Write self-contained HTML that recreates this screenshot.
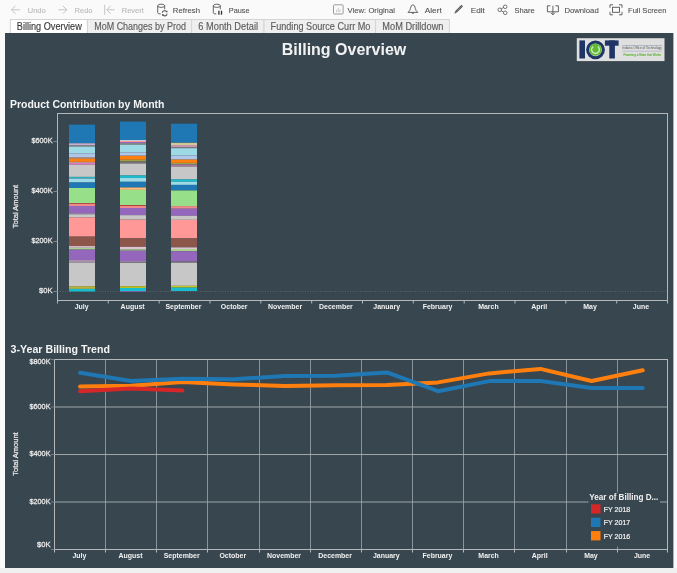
<!DOCTYPE html>
<html><head><meta charset="utf-8"><style>
html,body{margin:0;padding:0;width:677px;height:573px;overflow:hidden;background:#fafafa;font-family:"Liberation Sans", sans-serif;}
svg{position:absolute;left:0;top:0;display:block;will-change:transform}
</style></head><body>
<svg width="677" height="573" viewBox="0 0 677 573">
<rect x="0" y="0" width="677" height="573" fill="#fafafa"/>
<rect x="0" y="568" width="677" height="5" fill="#f0f0f0"/>
<path d="M20.0,9.8 H11.5 M15.5,5.800000000000001 L11.5,9.8 L15.5,13.8" stroke="#c0c0c0" fill="none" stroke-width="0.9"/>
<text x="27.8" y="12.6" font-family='"Liberation Sans", sans-serif' font-size="7.4" textLength="17.9" lengthAdjust="spacingAndGlyphs" fill="#b8b8b8" stroke="#b8b8b8" stroke-width="0.08">Undo</text>
<path d="M58.3,9.8 H66.8 M62.8,5.800000000000001 L66.8,9.8 L62.8,13.8" stroke="#c0c0c0" fill="none" stroke-width="0.9"/>
<text x="74.6" y="12.6" font-family='"Liberation Sans", sans-serif' font-size="7.4" textLength="17.9" lengthAdjust="spacingAndGlyphs" fill="#b8b8b8" stroke="#b8b8b8" stroke-width="0.08">Redo</text>
<path d="M104.7,4.800000000000001 V14.8 M114.7,9.8 H106.7 M110.7,5.800000000000001 L106.7,9.8 L110.7,13.8" stroke="#c0c0c0" fill="none" stroke-width="0.9"/>
<text x="121.7" y="12.6" font-family='"Liberation Sans", sans-serif' font-size="7.4" textLength="22.2" lengthAdjust="spacingAndGlyphs" fill="#b8b8b8" stroke="#b8b8b8" stroke-width="0.08">Revert</text>
<path d="M157.7,5.800000000000001 V12.8 Q157.7,14.0 160.7,14.0 M164.7,5.800000000000001 V9.3 M157.7,5.800000000000001 A3.5,1.6 0 0 1 164.7,5.800000000000001 A3.5,1.6 0 0 1 157.7,5.800000000000001" stroke="#555" fill="none" stroke-width="0.9"/><path d="M162.29999999999998,12.8 A2.4,2.4 0 0 1 166.7,11.8 M167.1,13.8 A2.4,2.4 0 0 1 162.7,14.8" stroke="#555" fill="none" stroke-width="1.1"/><path d="M167.5,10.4 L167.29999999999998,12.600000000000001 L165.29999999999998,12.0 Z M161.89999999999998,16.200000000000003 L162.1,14.0 L164.1,14.600000000000001 Z" fill="#555"/>
<text x="172.8" y="12.6" font-family='"Liberation Sans", sans-serif' font-size="7.4" textLength="27.2" lengthAdjust="spacingAndGlyphs" fill="#4e4e4e" stroke="#4e4e4e" stroke-width="0.08">Refresh</text>
<path d="M213.3,5.800000000000001 V12.8 Q213.3,14.0 216.3,14.0 M220.3,5.800000000000001 V9.3 M213.3,5.800000000000001 A3.5,1.6 0 0 1 220.3,5.800000000000001 A3.5,1.6 0 0 1 213.3,5.800000000000001" stroke="#555" fill="none" stroke-width="0.9"/><path d="M218.9,10.8 V14.8 M221.5,10.8 V14.8" stroke="#333" stroke-width="1.3"/>
<text x="228.8" y="12.6" font-family='"Liberation Sans", sans-serif' font-size="7.4" textLength="20.8" lengthAdjust="spacingAndGlyphs" fill="#4e4e4e" stroke="#4e4e4e" stroke-width="0.08">Pause</text>
<rect x="333.5" y="4.800000000000001" width="9.6" height="9.2" rx="0.8" stroke="#9a9a9a" fill="none" stroke-width="1"/><path d="M336.5,12.3 V9.8 M338.3,12.3 V7.800000000000001 M340,12.3 V9.3" stroke="#aaa" stroke-width="0.6"/>
<text x="347.6" y="12.6" font-family='"Liberation Sans", sans-serif' font-size="7.4" textLength="47.3" lengthAdjust="spacingAndGlyphs" fill="#4e4e4e" stroke="#4e4e4e" stroke-width="0.08">View: Original</text>
<path d="M408.0,12.4 H417.79999999999995 Q415.79999999999995,11.0 415.29999999999995,8.3 Q414.79999999999995,4.800000000000001 412.9,4.800000000000001 Q411.0,4.800000000000001 410.5,8.3 Q410.0,11.0 408.0,12.4 Z M411.7,12.8 Q412.9,14.4 414.09999999999997,12.8" stroke="#555" fill="none" stroke-width="0.9"/>
<text x="424.7" y="12.6" font-family='"Liberation Sans", sans-serif' font-size="7.4" textLength="17" lengthAdjust="spacingAndGlyphs" fill="#4e4e4e" stroke="#4e4e4e" stroke-width="0.08">Alert</text>
<path d="M455.8,12.0 L462.2,5.6000000000000005" stroke="#555" stroke-width="2.2"/><path d="M454.3,13.700000000000001 L455.2,11.600000000000001 L456.4,12.8 Z" fill="#555"/><path d="M456.6,11.200000000000001 L461.6,6.200000000000001" stroke="#bbb" stroke-width="0.5"/>
<text x="470.7" y="12.6" font-family='"Liberation Sans", sans-serif' font-size="7.4" textLength="14.1" lengthAdjust="spacingAndGlyphs" fill="#4e4e4e" stroke="#4e4e4e" stroke-width="0.08">Edit</text>
<circle cx="499.7" cy="9.8" r="1.8" stroke="#555" fill="none" stroke-width="0.8"/><circle cx="505.2" cy="6.800000000000001" r="1.8" stroke="#555" fill="none" stroke-width="0.8"/><circle cx="505.2" cy="12.8" r="1.8" stroke="#555" fill="none" stroke-width="0.8"/><path d="M501.2,8.8 L503.7,7.500000000000001 M501.2,10.8 L503.7,12.100000000000001" stroke="#555" stroke-width="0.8"/>
<text x="514.4" y="12.6" font-family='"Liberation Sans", sans-serif' font-size="7.4" textLength="20.3" lengthAdjust="spacingAndGlyphs" fill="#4e4e4e" stroke="#4e4e4e" stroke-width="0.08">Share</text>
<path d="M550.4,5.800000000000001 H547.4 V11.8 H558.4 V5.800000000000001 H555.4 M552.9,5.800000000000001 V14.8 M550.9,12.8 L552.9,14.8 L554.9,12.8" stroke="#555" fill="none" stroke-width="0.9"/>
<text x="564.4" y="12.6" font-family='"Liberation Sans", sans-serif' font-size="7.4" textLength="34.3" lengthAdjust="spacingAndGlyphs" fill="#4e4e4e" stroke="#4e4e4e" stroke-width="0.08">Download</text>
<path d="M610,7.800000000000001 V4.800000000000001 H613 M619,4.800000000000001 H622 V7.800000000000001 M622,11.8 V14.8 H619 M613,14.8 H610 V11.8" stroke="#555" fill="none" stroke-width="0.9"/><rect x="612.5" y="7.300000000000001" width="7" height="5" stroke="#555" fill="none" stroke-width="0.9"/>
<text x="628" y="12.6" font-family='"Liberation Sans", sans-serif' font-size="7.4" textLength="38.4" lengthAdjust="spacingAndGlyphs" fill="#4e4e4e" stroke="#4e4e4e" stroke-width="0.08">Full Screen</text>
<rect x="10.3" y="19.5" width="77.10000000000001" height="14" fill="#ffffff" stroke="#d4d4d4" stroke-width="1"/>
<text x="16.8" y="29.5" font-family='"Liberation Sans", sans-serif' font-size="10.6" textLength="65" lengthAdjust="spacingAndGlyphs" fill="#3a3a3a" stroke="#3a3a3a" stroke-width="0.15">Billing Overview</text>
<rect x="87.4" y="19.5" width="104.19999999999999" height="14" fill="#efefef" stroke="#d4d4d4" stroke-width="1"/>
<text x="94.2" y="29.5" font-family='"Liberation Sans", sans-serif' font-size="10.6" textLength="91.8" lengthAdjust="spacingAndGlyphs" fill="#5c5c5c" stroke="#5c5c5c" stroke-width="0.15">MoM Changes by Prod</text>
<rect x="191.6" y="19.5" width="72.4" height="14" fill="#efefef" stroke="#d4d4d4" stroke-width="1"/>
<text x="198.3" y="29.5" font-family='"Liberation Sans", sans-serif' font-size="10.6" textLength="59.7" lengthAdjust="spacingAndGlyphs" fill="#5c5c5c" stroke="#5c5c5c" stroke-width="0.15">6 Month Detail</text>
<rect x="264" y="19.5" width="111.60000000000002" height="14" fill="#efefef" stroke="#d4d4d4" stroke-width="1"/>
<text x="270.6" y="29.5" font-family='"Liberation Sans", sans-serif' font-size="10.6" textLength="99.8" lengthAdjust="spacingAndGlyphs" fill="#5c5c5c" stroke="#5c5c5c" stroke-width="0.15">Funding Source Curr Mo</text>
<rect x="375.6" y="19.5" width="73.79999999999995" height="14" fill="#efefef" stroke="#d4d4d4" stroke-width="1"/>
<text x="382.3" y="29.5" font-family='"Liberation Sans", sans-serif' font-size="10.6" textLength="61.2" lengthAdjust="spacingAndGlyphs" fill="#5c5c5c" stroke="#5c5c5c" stroke-width="0.15">MoM Drilldown</text>
<rect x="5" y="33" width="668.4" height="535" fill="#37464f"/>
<text x="344" y="55" text-anchor="middle" font-family='"Liberation Sans", sans-serif' font-weight="bold" font-size="16" fill="#f2f2f2">Billing Overview</text>
<text x="10" y="107.5" font-family='"Liberation Sans", sans-serif' font-weight="bold" font-size="11" textLength="154.5" lengthAdjust="spacingAndGlyphs" fill="#f4f4f4">Product Contribution by Month</text>
<text x="10.5" y="352.7" font-family='"Liberation Sans", sans-serif' font-weight="bold" font-size="11" textLength="99.5" lengthAdjust="spacingAndGlyphs" fill="#f4f4f4">3-Year Billing Trend</text>
<rect x="57.5" y="113.5" width="610.0" height="187.0" fill="none" stroke="#b4b8ba" stroke-width="1"/>
<line x1="57.5" y1="291.5" x2="667.5" y2="291.5" stroke="#56646b" stroke-width="1" stroke-dasharray="1,1.5"/>
<line x1="53.5" y1="291.5" x2="57.5" y2="291.5" stroke="#7d898f" stroke-width="1"/>
<text x="52.5" y="293.4" text-anchor="end" font-family='"Liberation Sans", sans-serif' font-size="8" textLength="13.5" lengthAdjust="spacingAndGlyphs" fill="#e8e8e8" stroke="#e8e8e8" stroke-width="0.3">$0K</text>
<line x1="53.5" y1="241.5" x2="57.5" y2="241.5" stroke="#7d898f" stroke-width="1"/>
<text x="52.5" y="243.4" text-anchor="end" font-family='"Liberation Sans", sans-serif' font-size="8" textLength="21" lengthAdjust="spacingAndGlyphs" fill="#e8e8e8" stroke="#e8e8e8" stroke-width="0.3">$200K</text>
<line x1="53.5" y1="191.5" x2="57.5" y2="191.5" stroke="#7d898f" stroke-width="1"/>
<text x="52.5" y="193.4" text-anchor="end" font-family='"Liberation Sans", sans-serif' font-size="8" textLength="21" lengthAdjust="spacingAndGlyphs" fill="#e8e8e8" stroke="#e8e8e8" stroke-width="0.3">$400K</text>
<line x1="53.5" y1="141.5" x2="57.5" y2="141.5" stroke="#7d898f" stroke-width="1"/>
<text x="52.5" y="143.4" text-anchor="end" font-family='"Liberation Sans", sans-serif' font-size="8" textLength="21" lengthAdjust="spacingAndGlyphs" fill="#e8e8e8" stroke="#e8e8e8" stroke-width="0.3">$600K</text>
<line x1="57.5" y1="300.5" x2="57.5" y2="303.5" stroke="#b4b8ba" stroke-width="1"/>
<line x1="108.3" y1="300.5" x2="108.3" y2="303.5" stroke="#b4b8ba" stroke-width="1"/>
<line x1="159.2" y1="300.5" x2="159.2" y2="303.5" stroke="#b4b8ba" stroke-width="1"/>
<line x1="210.0" y1="300.5" x2="210.0" y2="303.5" stroke="#b4b8ba" stroke-width="1"/>
<line x1="260.8" y1="300.5" x2="260.8" y2="303.5" stroke="#b4b8ba" stroke-width="1"/>
<line x1="311.7" y1="300.5" x2="311.7" y2="303.5" stroke="#b4b8ba" stroke-width="1"/>
<line x1="362.5" y1="300.5" x2="362.5" y2="303.5" stroke="#b4b8ba" stroke-width="1"/>
<line x1="413.3" y1="300.5" x2="413.3" y2="303.5" stroke="#b4b8ba" stroke-width="1"/>
<line x1="464.2" y1="300.5" x2="464.2" y2="303.5" stroke="#b4b8ba" stroke-width="1"/>
<line x1="515.0" y1="300.5" x2="515.0" y2="303.5" stroke="#b4b8ba" stroke-width="1"/>
<line x1="565.8" y1="300.5" x2="565.8" y2="303.5" stroke="#b4b8ba" stroke-width="1"/>
<line x1="616.7" y1="300.5" x2="616.7" y2="303.5" stroke="#b4b8ba" stroke-width="1"/>
<line x1="667.5" y1="300.5" x2="667.5" y2="303.5" stroke="#b4b8ba" stroke-width="1"/>
<text x="81.7" y="308.8" text-anchor="middle" font-family='"Liberation Sans", sans-serif' font-weight="bold" font-size="8" textLength="13.9" lengthAdjust="spacingAndGlyphs" fill="#f2f2f2">July</text>
<text x="132.6" y="308.8" text-anchor="middle" font-family='"Liberation Sans", sans-serif' font-weight="bold" font-size="8" textLength="24.0" lengthAdjust="spacingAndGlyphs" fill="#f2f2f2">August</text>
<text x="183.4" y="308.8" text-anchor="middle" font-family='"Liberation Sans", sans-serif' font-weight="bold" font-size="8" textLength="36.0" lengthAdjust="spacingAndGlyphs" fill="#f2f2f2">September</text>
<text x="234.2" y="308.8" text-anchor="middle" font-family='"Liberation Sans", sans-serif' font-weight="bold" font-size="8" textLength="26.7" lengthAdjust="spacingAndGlyphs" fill="#f2f2f2">October</text>
<text x="285.1" y="308.8" text-anchor="middle" font-family='"Liberation Sans", sans-serif' font-weight="bold" font-size="8" textLength="34.0" lengthAdjust="spacingAndGlyphs" fill="#f2f2f2">November</text>
<text x="335.9" y="308.8" text-anchor="middle" font-family='"Liberation Sans", sans-serif' font-weight="bold" font-size="8" textLength="33.7" lengthAdjust="spacingAndGlyphs" fill="#f2f2f2">December</text>
<text x="386.7" y="308.8" text-anchor="middle" font-family='"Liberation Sans", sans-serif' font-weight="bold" font-size="8" textLength="26.7" lengthAdjust="spacingAndGlyphs" fill="#f2f2f2">January</text>
<text x="437.6" y="308.8" text-anchor="middle" font-family='"Liberation Sans", sans-serif' font-weight="bold" font-size="8" textLength="29.8" lengthAdjust="spacingAndGlyphs" fill="#f2f2f2">February</text>
<text x="488.4" y="308.8" text-anchor="middle" font-family='"Liberation Sans", sans-serif' font-weight="bold" font-size="8" textLength="20.5" lengthAdjust="spacingAndGlyphs" fill="#f2f2f2">March</text>
<text x="539.2" y="308.8" text-anchor="middle" font-family='"Liberation Sans", sans-serif' font-weight="bold" font-size="8" textLength="15.9" lengthAdjust="spacingAndGlyphs" fill="#f2f2f2">April</text>
<text x="590.0" y="308.8" text-anchor="middle" font-family='"Liberation Sans", sans-serif' font-weight="bold" font-size="8" textLength="13.5" lengthAdjust="spacingAndGlyphs" fill="#f2f2f2">May</text>
<text x="640.9" y="308.8" text-anchor="middle" font-family='"Liberation Sans", sans-serif' font-weight="bold" font-size="8" textLength="16.2" lengthAdjust="spacingAndGlyphs" fill="#f2f2f2">June</text>
<text transform="translate(17.5,206.5) rotate(-90)" text-anchor="middle" font-family='"Liberation Sans", sans-serif' font-size="7.5" fill="#e4e4e4" stroke="#e4e4e4" stroke-width="0.25">Total Amount</text>
<rect x="69" y="124.6" width="26" height="18.7" fill="#1f77b4"/>
<rect x="69" y="143.3" width="26" height="1.9" fill="#c5b0d5"/>
<rect x="69" y="145.2" width="26" height="1.4" fill="#8a8a8a"/>
<rect x="69" y="146.6" width="26" height="6.8" fill="#9edae5"/>
<rect x="69" y="153.4" width="26" height="3.9" fill="#aec7e8"/>
<rect x="69" y="157.3" width="26" height="1.4" fill="#c49c94"/>
<rect x="69" y="158.7" width="26" height="3.2" fill="#ff7f0e"/>
<rect x="69" y="161.9" width="26" height="1.0" fill="#c49c94"/>
<rect x="69" y="162.9" width="26" height="1.8" fill="#e377c2"/>
<rect x="69" y="164.7" width="26" height="12.2" fill="#c7c7c7"/>
<rect x="69" y="176.9" width="26" height="1.7" fill="#2fb0bf"/>
<rect x="69" y="178.6" width="26" height="3.9" fill="#9edae5"/>
<rect x="69" y="182.5" width="26" height="5.5" fill="#1f77b4"/>
<rect x="69" y="188.0" width="26" height="15.2" fill="#98df8a"/>
<rect x="69" y="203.2" width="26" height="0.6" fill="#d62728"/>
<rect x="69" y="203.8" width="26" height="2.2" fill="#f08a88"/>
<rect x="69" y="206.0" width="26" height="7.6" fill="#9467bd"/>
<rect x="69" y="213.6" width="26" height="0.7" fill="#c5b0c5"/>
<rect x="69" y="214.3" width="26" height="3.1" fill="#c7c7c7"/>
<rect x="69" y="217.4" width="26" height="19.2" fill="#ff9896"/>
<rect x="69" y="236.6" width="26" height="9.5" fill="#8c564b"/>
<rect x="69" y="246.1" width="26" height="1.7" fill="#e0c4d4"/>
<rect x="69" y="247.8" width="26" height="1.8" fill="#a8d08d"/>
<rect x="69" y="249.6" width="26" height="10.4" fill="#9467bd"/>
<rect x="69" y="260.0" width="26" height="2.7" fill="#a890a8"/>
<rect x="69" y="262.7" width="26" height="23.5" fill="#c7c7c7"/>
<rect x="69" y="286.2" width="26" height="2.7" fill="#b8b040"/>
<rect x="69" y="288.9" width="26" height="2.6" fill="#17becf"/>
<rect x="120" y="121.6" width="26" height="18.5" fill="#1f77b4"/>
<rect x="120" y="140.1" width="26" height="0.9" fill="#d0dce4"/>
<rect x="120" y="141.0" width="26" height="1.0" fill="#ff9896"/>
<rect x="120" y="142.0" width="26" height="1.0" fill="#9467bd"/>
<rect x="120" y="143.0" width="26" height="1.7" fill="#858585"/>
<rect x="120" y="144.7" width="26" height="7.7" fill="#9edae5"/>
<rect x="120" y="152.4" width="26" height="3.2" fill="#aec7e8"/>
<rect x="120" y="155.6" width="26" height="0.4" fill="#c49c94"/>
<rect x="120" y="156.0" width="26" height="3.8" fill="#ff7f0e"/>
<rect x="120" y="159.8" width="26" height="1.4" fill="#98a048"/>
<rect x="120" y="161.2" width="26" height="1.0" fill="#8c6d5b"/>
<rect x="120" y="162.2" width="26" height="1.4" fill="#7f7f7f"/>
<rect x="120" y="163.6" width="26" height="11.9" fill="#c7c7c7"/>
<rect x="120" y="175.5" width="26" height="2.4" fill="#17becf"/>
<rect x="120" y="177.9" width="26" height="3.9" fill="#9edae5"/>
<rect x="120" y="181.8" width="26" height="5.7" fill="#1f77b4"/>
<rect x="120" y="187.5" width="26" height="2.4" fill="#ffbb78"/>
<rect x="120" y="189.9" width="26" height="15.3" fill="#98df8a"/>
<rect x="120" y="205.2" width="26" height="0.7" fill="#d62728"/>
<rect x="120" y="205.9" width="26" height="2.1" fill="#f08a88"/>
<rect x="120" y="208.0" width="26" height="7.2" fill="#9467bd"/>
<rect x="120" y="215.2" width="26" height="4.4" fill="#c7c7c7"/>
<rect x="120" y="219.6" width="26" height="18.6" fill="#ff9896"/>
<rect x="120" y="238.2" width="26" height="8.7" fill="#8c564b"/>
<rect x="120" y="246.9" width="26" height="2.4" fill="#dcc4d4"/>
<rect x="120" y="249.3" width="26" height="1.4" fill="#a8d08d"/>
<rect x="120" y="250.7" width="26" height="10.7" fill="#9467bd"/>
<rect x="120" y="261.4" width="26" height="0.8" fill="#c5a0c0"/>
<rect x="120" y="262.2" width="26" height="0.8" fill="#7f7f7f"/>
<rect x="120" y="263.0" width="26" height="23.2" fill="#c7c7c7"/>
<rect x="120" y="286.2" width="26" height="1.8" fill="#bcbd22"/>
<rect x="120" y="288.0" width="26" height="3.0" fill="#17becf"/>
<rect x="120" y="291.0" width="26" height="0.7" fill="#9467bd"/>
<rect x="171" y="123.7" width="26" height="19.1" fill="#1f77b4"/>
<rect x="171" y="142.8" width="26" height="2.2" fill="#cfc98f"/>
<rect x="171" y="145.0" width="26" height="2.1" fill="#c995b3"/>
<rect x="171" y="147.1" width="26" height="1.1" fill="#7f7f7f"/>
<rect x="171" y="148.2" width="26" height="7.2" fill="#9edae5"/>
<rect x="171" y="155.4" width="26" height="4.2" fill="#aec7e8"/>
<rect x="171" y="159.6" width="26" height="3.3" fill="#ff7f0e"/>
<rect x="171" y="162.9" width="26" height="1.4" fill="#98a048"/>
<rect x="171" y="164.3" width="26" height="2.3" fill="#a87a9a"/>
<rect x="171" y="166.6" width="26" height="12.9" fill="#c7c7c7"/>
<rect x="171" y="179.5" width="26" height="2.3" fill="#17becf"/>
<rect x="171" y="181.8" width="26" height="3.1" fill="#9edae5"/>
<rect x="171" y="184.9" width="26" height="5.6" fill="#1f77b4"/>
<rect x="171" y="190.5" width="26" height="15.6" fill="#98df8a"/>
<rect x="171" y="206.1" width="26" height="2.6" fill="#f08a88"/>
<rect x="171" y="208.7" width="26" height="7.1" fill="#9467bd"/>
<rect x="171" y="215.8" width="26" height="4.0" fill="#c7c7c7"/>
<rect x="171" y="219.8" width="26" height="18.5" fill="#ff9896"/>
<rect x="171" y="238.3" width="26" height="9.1" fill="#8c564b"/>
<rect x="171" y="247.4" width="26" height="1.6" fill="#dcc4d4"/>
<rect x="171" y="249.0" width="26" height="2.2" fill="#a8d08d"/>
<rect x="171" y="251.2" width="26" height="10.4" fill="#9467bd"/>
<rect x="171" y="261.6" width="26" height="1.4" fill="#7f7f7f"/>
<rect x="171" y="263.0" width="26" height="22.8" fill="#c7c7c7"/>
<rect x="171" y="285.8" width="26" height="1.8" fill="#c8c820"/>
<rect x="171" y="287.6" width="26" height="3.4" fill="#17becf"/>
<line x1="105.5" y1="359.5" x2="105.5" y2="549.5" stroke="#899398" stroke-width="1"/>
<line x1="156.5" y1="359.5" x2="156.5" y2="549.5" stroke="#899398" stroke-width="1"/>
<line x1="207.5" y1="359.5" x2="207.5" y2="549.5" stroke="#899398" stroke-width="1"/>
<line x1="259.5" y1="359.5" x2="259.5" y2="549.5" stroke="#899398" stroke-width="1"/>
<line x1="310.5" y1="359.5" x2="310.5" y2="549.5" stroke="#899398" stroke-width="1"/>
<line x1="361.5" y1="359.5" x2="361.5" y2="549.5" stroke="#899398" stroke-width="1"/>
<line x1="412.5" y1="359.5" x2="412.5" y2="549.5" stroke="#899398" stroke-width="1"/>
<line x1="463.5" y1="359.5" x2="463.5" y2="549.5" stroke="#899398" stroke-width="1"/>
<line x1="514.5" y1="359.5" x2="514.5" y2="549.5" stroke="#899398" stroke-width="1"/>
<line x1="566.5" y1="359.5" x2="566.5" y2="549.5" stroke="#899398" stroke-width="1"/>
<line x1="617.5" y1="359.5" x2="617.5" y2="549.5" stroke="#899398" stroke-width="1"/>
<line x1="54.5" y1="502.0" x2="667.5" y2="502.0" stroke="#9ea6aa" stroke-width="1"/>
<line x1="54.5" y1="454.5" x2="667.5" y2="454.5" stroke="#9ea6aa" stroke-width="1"/>
<line x1="54.5" y1="407.0" x2="667.5" y2="407.0" stroke="#9ea6aa" stroke-width="1"/>
<rect x="54.5" y="359.5" width="613.0" height="190.0" fill="none" stroke="#b4b8ba" stroke-width="1"/>
<line x1="51.0" y1="549.5" x2="54.5" y2="549.5" stroke="#6f7b81" stroke-width="1"/>
<text x="50.5" y="547.1" text-anchor="end" font-family='"Liberation Sans", sans-serif' font-size="8" textLength="13.5" lengthAdjust="spacingAndGlyphs" fill="#e8e8e8" stroke="#e8e8e8" stroke-width="0.3">$0K</text>
<line x1="51.0" y1="502.0" x2="54.5" y2="502.0" stroke="#6f7b81" stroke-width="1"/>
<text x="50.5" y="503.9" text-anchor="end" font-family='"Liberation Sans", sans-serif' font-size="8" textLength="21" lengthAdjust="spacingAndGlyphs" fill="#e8e8e8" stroke="#e8e8e8" stroke-width="0.3">$200K</text>
<line x1="51.0" y1="454.5" x2="54.5" y2="454.5" stroke="#6f7b81" stroke-width="1"/>
<text x="50.5" y="456.4" text-anchor="end" font-family='"Liberation Sans", sans-serif' font-size="8" textLength="21" lengthAdjust="spacingAndGlyphs" fill="#e8e8e8" stroke="#e8e8e8" stroke-width="0.3">$400K</text>
<line x1="51.0" y1="407.0" x2="54.5" y2="407.0" stroke="#6f7b81" stroke-width="1"/>
<text x="50.5" y="408.9" text-anchor="end" font-family='"Liberation Sans", sans-serif' font-size="8" textLength="21" lengthAdjust="spacingAndGlyphs" fill="#e8e8e8" stroke="#e8e8e8" stroke-width="0.3">$600K</text>
<line x1="51.0" y1="359.5" x2="54.5" y2="359.5" stroke="#6f7b81" stroke-width="1"/>
<text x="50.5" y="364.1" text-anchor="end" font-family='"Liberation Sans", sans-serif' font-size="8" textLength="21" lengthAdjust="spacingAndGlyphs" fill="#e8e8e8" stroke="#e8e8e8" stroke-width="0.3">$800K</text>
<line x1="54.5" y1="549.5" x2="54.5" y2="552.5" stroke="#b4b8ba" stroke-width="1"/>
<line x1="105.5" y1="549.5" x2="105.5" y2="552.5" stroke="#b4b8ba" stroke-width="1"/>
<line x1="156.5" y1="549.5" x2="156.5" y2="552.5" stroke="#b4b8ba" stroke-width="1"/>
<line x1="207.5" y1="549.5" x2="207.5" y2="552.5" stroke="#b4b8ba" stroke-width="1"/>
<line x1="259.5" y1="549.5" x2="259.5" y2="552.5" stroke="#b4b8ba" stroke-width="1"/>
<line x1="310.5" y1="549.5" x2="310.5" y2="552.5" stroke="#b4b8ba" stroke-width="1"/>
<line x1="361.5" y1="549.5" x2="361.5" y2="552.5" stroke="#b4b8ba" stroke-width="1"/>
<line x1="412.5" y1="549.5" x2="412.5" y2="552.5" stroke="#b4b8ba" stroke-width="1"/>
<line x1="463.5" y1="549.5" x2="463.5" y2="552.5" stroke="#b4b8ba" stroke-width="1"/>
<line x1="514.5" y1="549.5" x2="514.5" y2="552.5" stroke="#b4b8ba" stroke-width="1"/>
<line x1="566.5" y1="549.5" x2="566.5" y2="552.5" stroke="#b4b8ba" stroke-width="1"/>
<line x1="617.5" y1="549.5" x2="617.5" y2="552.5" stroke="#b4b8ba" stroke-width="1"/>
<line x1="667.5" y1="549.5" x2="667.5" y2="552.5" stroke="#b4b8ba" stroke-width="1"/>
<text x="79.4" y="557.9" text-anchor="middle" font-family='"Liberation Sans", sans-serif' font-weight="bold" font-size="8" textLength="13.9" lengthAdjust="spacingAndGlyphs" fill="#f2f2f2">July</text>
<text x="130.5" y="557.9" text-anchor="middle" font-family='"Liberation Sans", sans-serif' font-weight="bold" font-size="8" textLength="24.0" lengthAdjust="spacingAndGlyphs" fill="#f2f2f2">August</text>
<text x="181.7" y="557.9" text-anchor="middle" font-family='"Liberation Sans", sans-serif' font-weight="bold" font-size="8" textLength="36.0" lengthAdjust="spacingAndGlyphs" fill="#f2f2f2">September</text>
<text x="232.8" y="557.9" text-anchor="middle" font-family='"Liberation Sans", sans-serif' font-weight="bold" font-size="8" textLength="26.7" lengthAdjust="spacingAndGlyphs" fill="#f2f2f2">October</text>
<text x="284.0" y="557.9" text-anchor="middle" font-family='"Liberation Sans", sans-serif' font-weight="bold" font-size="8" textLength="34.0" lengthAdjust="spacingAndGlyphs" fill="#f2f2f2">November</text>
<text x="335.1" y="557.9" text-anchor="middle" font-family='"Liberation Sans", sans-serif' font-weight="bold" font-size="8" textLength="33.7" lengthAdjust="spacingAndGlyphs" fill="#f2f2f2">December</text>
<text x="386.3" y="557.9" text-anchor="middle" font-family='"Liberation Sans", sans-serif' font-weight="bold" font-size="8" textLength="26.7" lengthAdjust="spacingAndGlyphs" fill="#f2f2f2">January</text>
<text x="437.4" y="557.9" text-anchor="middle" font-family='"Liberation Sans", sans-serif' font-weight="bold" font-size="8" textLength="29.8" lengthAdjust="spacingAndGlyphs" fill="#f2f2f2">February</text>
<text x="488.6" y="557.9" text-anchor="middle" font-family='"Liberation Sans", sans-serif' font-weight="bold" font-size="8" textLength="20.5" lengthAdjust="spacingAndGlyphs" fill="#f2f2f2">March</text>
<text x="539.7" y="557.9" text-anchor="middle" font-family='"Liberation Sans", sans-serif' font-weight="bold" font-size="8" textLength="15.9" lengthAdjust="spacingAndGlyphs" fill="#f2f2f2">April</text>
<text x="590.9" y="557.9" text-anchor="middle" font-family='"Liberation Sans", sans-serif' font-weight="bold" font-size="8" textLength="13.5" lengthAdjust="spacingAndGlyphs" fill="#f2f2f2">May</text>
<text x="642.0" y="557.9" text-anchor="middle" font-family='"Liberation Sans", sans-serif' font-weight="bold" font-size="8" textLength="16.2" lengthAdjust="spacingAndGlyphs" fill="#f2f2f2">June</text>
<text transform="translate(17.5,454) rotate(-90)" text-anchor="middle" font-family='"Liberation Sans", sans-serif' font-size="7.5" fill="#e4e4e4" stroke="#e4e4e4" stroke-width="0.25">Total Amount</text>
<polyline points="80.1,386.6 131.2,385.7 182.4,382.0 233.5,384.4 284.7,385.9 335.8,385.2 387.0,385.0 438.1,382.4 489.3,373.4 540.4,368.9 591.6,381.0 642.7,370.2" fill="none" stroke="#ff7f0e" stroke-width="4" stroke-linecap="round" stroke-linejoin="round"/>
<polyline points="80.1,391.2 131.2,388.6 182.4,390.4" fill="none" stroke="#d62728" stroke-width="4" stroke-linecap="round" stroke-linejoin="round"/>
<polyline points="80.1,372.8 131.2,380.9 182.4,378.8 233.5,379.3 284.7,375.9 335.8,375.8 387.0,372.4 438.1,391.2 489.3,381.1 540.4,381.1 591.6,388.0 642.7,388.0" fill="none" stroke="#1f77b4" stroke-width="4" stroke-linecap="round" stroke-linejoin="round"/>
<rect x="588.5" y="492.5" width="71.5" height="54" fill="#37464f"/>
<text x="589.3" y="499.9" font-family='"Liberation Sans", sans-serif' font-weight="bold" font-size="8.6" textLength="69" lengthAdjust="spacingAndGlyphs" fill="#f0f0f0">Year of Billing D...</text>
<rect x="591" y="504.3" width="9.5" height="9.3" fill="#d62728"/>
<text x="603.7" y="511.9" font-family='"Liberation Sans", sans-serif' font-size="7.5" textLength="26.6" lengthAdjust="spacingAndGlyphs" fill="#f2f2f2" stroke="#f2f2f2" stroke-width="0.2">FY 2018</text>
<rect x="591" y="517.7" width="9.5" height="9.3" fill="#1f77b4"/>
<text x="603.7" y="525.3" font-family='"Liberation Sans", sans-serif' font-size="7.5" textLength="26.6" lengthAdjust="spacingAndGlyphs" fill="#f2f2f2" stroke="#f2f2f2" stroke-width="0.2">FY 2017</text>
<rect x="591" y="531.1" width="9.5" height="9.3" fill="#ff7f0e"/>
<text x="603.7" y="538.7" font-family='"Liberation Sans", sans-serif' font-size="7.5" textLength="26.6" lengthAdjust="spacingAndGlyphs" fill="#f2f2f2" stroke="#f2f2f2" stroke-width="0.2">FY 2016</text>
<rect x="576.8" y="38.2" width="87.7" height="22.9" fill="#dfdfdf"/>
<rect x="579.4" y="40.4" width="5.6" height="18.1" fill="#1f3566"/>
<circle cx="595.5" cy="49.8" r="7.9" fill="none" stroke="#1f3566" stroke-width="3"/>
<circle cx="595.5" cy="49.6" r="6.2" fill="#62b837"/>
<path d="M593.2,46.4 A3.9,3.9 0 1 0 597.8,46.4" fill="none" stroke="#d8efc8" stroke-width="1.3"/>
<rect x="594.3" y="44" width="2.6" height="6.3" fill="#62b837"/>
<rect x="604.9" y="40.4" width="13.7" height="5.3" fill="#1f3566"/>
<rect x="609.3" y="40.4" width="5.6" height="18.1" fill="#1f3566"/>
<rect x="622.7" y="45.1" width="39.2" height="1" fill="#a9b2c2"/>
<rect x="622.5" y="50.6" width="39.4" height="1.1" fill="#b9c0cc"/>
<text x="622.3" y="49.4" font-family='"Liberation Sans", sans-serif' font-size="2.9" textLength="39.6" lengthAdjust="spacingAndGlyphs" fill="#555">Indiana Office of Technology</text>
<text x="623.4" y="56" font-family='"Liberation Sans", sans-serif' font-size="4" textLength="37.7" lengthAdjust="spacingAndGlyphs" fill="#58b02a" stroke="#58b02a" stroke-width="0.1">Powering a State that Works</text>
</svg>
</body></html>
